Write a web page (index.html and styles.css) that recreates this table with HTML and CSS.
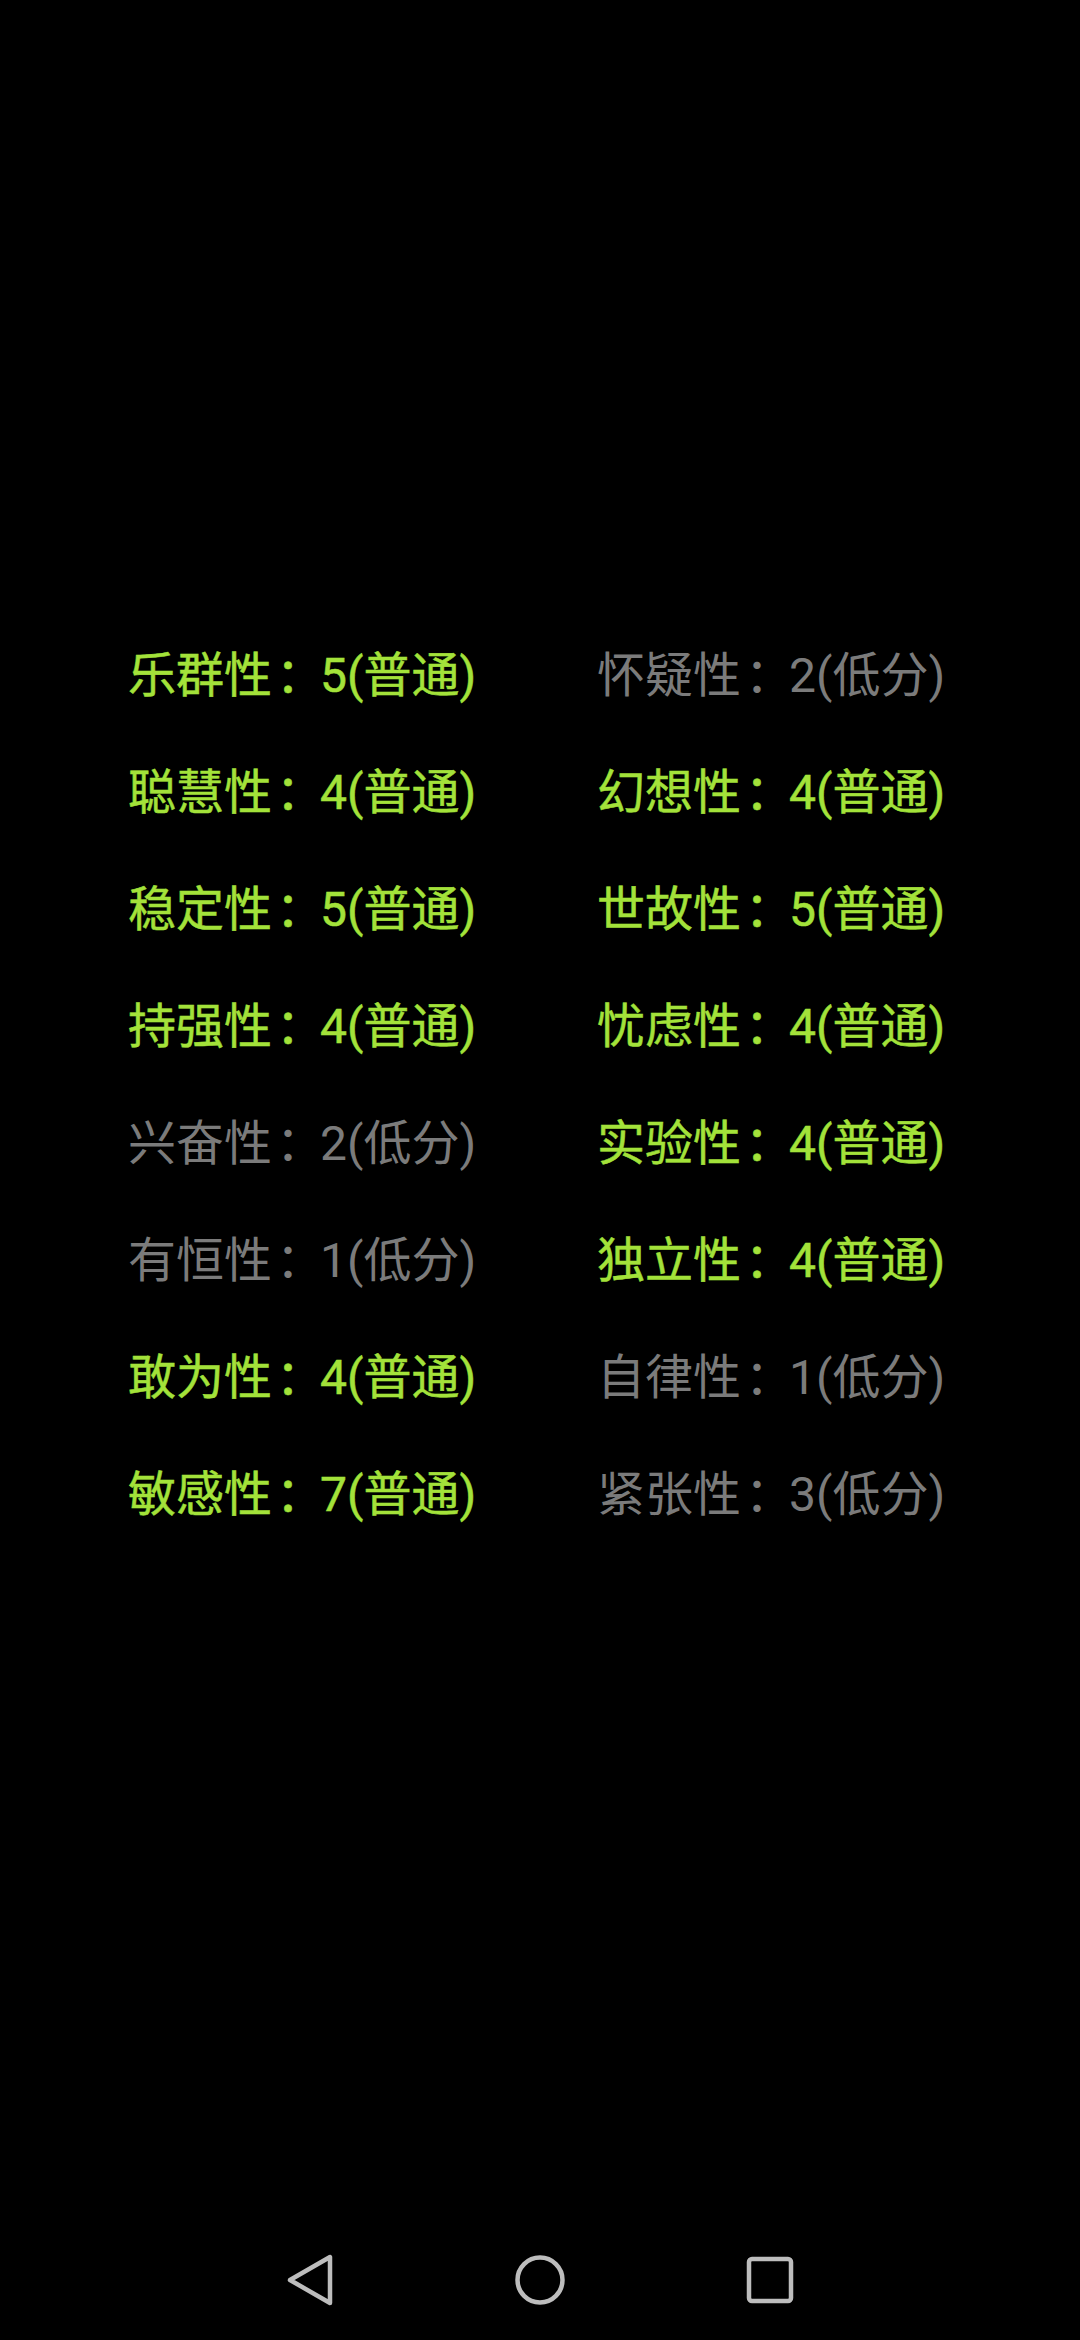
FILE: index.html
```html
<!DOCTYPE html>
<html lang="zh-CN">
<head>
<meta charset="utf-8">
<title>性格因素</title>
<link rel="stylesheet" href="styles.css">
</head>
<body>
<div class="screen">
  <main class="grid">
    <div class="item hi">乐群性<span class="colon">：</span>5(普通)</div>
    <div class="item lo">怀疑性<span class="colon">：</span>2(低分)</div>
    <div class="item hi">聪慧性<span class="colon">：</span>4(普通)</div>
    <div class="item hi">幻想性<span class="colon">：</span>4(普通)</div>
    <div class="item hi">稳定性<span class="colon">：</span>5(普通)</div>
    <div class="item hi">世故性<span class="colon">：</span>5(普通)</div>
    <div class="item hi">持强性<span class="colon">：</span>4(普通)</div>
    <div class="item hi">忧虑性<span class="colon">：</span>4(普通)</div>
    <div class="item lo">兴奋性<span class="colon">：</span>2(低分)</div>
    <div class="item hi">实验性<span class="colon">：</span>4(普通)</div>
    <div class="item lo">有恒性<span class="colon">：</span>1(低分)</div>
    <div class="item hi">独立性<span class="colon">：</span>4(普通)</div>
    <div class="item hi">敢为性<span class="colon">：</span>4(普通)</div>
    <div class="item lo">自律性<span class="colon">：</span>1(低分)</div>
    <div class="item hi">敏感性<span class="colon">：</span>7(普通)</div>
    <div class="item lo">紧张性<span class="colon">：</span>3(低分)</div>
  </main>
  <nav class="navbar">
    <svg class="nav-icon" width="48" height="52" viewBox="0 0 48 52">
      <path d="M44 3 L44 49 L4 26 Z" fill="none" stroke="#bdbdbd" stroke-width="4.5" stroke-linejoin="round"/>
    </svg>
    <svg class="nav-icon" width="52" height="52" viewBox="0 0 52 52">
      <circle cx="26" cy="26" r="22.5" fill="none" stroke="#bdbdbd" stroke-width="4.5"/>
    </svg>
    <svg class="nav-icon" width="48" height="48" viewBox="0 0 48 48">
      <rect x="3" y="3" width="42" height="42" rx="3" fill="none" stroke="#bdbdbd" stroke-width="4.5"/>
    </svg>
  </nav>
</div>
</body>
</html>
```
FILE: styles.css
```css
html, body {
  margin: 0;
  padding: 0;
  background: #000;
}
.screen {
  width: 1080px;
  height: 2340px;
  display: flex;
  flex-direction: column;
  background: #000;
  font-family: Roboto, "Noto Sans CJK SC", sans-serif;
}
.grid {
  display: grid;
  grid-template-columns: 469px auto;
  grid-auto-rows: 117px;
  padding: 617px 0 0 128px;
}
.item {
  font-size: 48px;
  line-height: 117px;
  white-space: nowrap;
}
.colon {
  padding-left: 4px;
  letter-spacing: -4px;
}
.hi {
  color: #a3e23a;
  font-weight: 400;
  -webkit-text-stroke: 0.5px #a3e23a;
}
.lo {
  color: #7b7b7b;
  font-weight: 400;
}
.navbar {
  margin-top: auto;
  height: 120px;
  display: flex;
  justify-content: center;
  align-items: center;
  gap: 180px;
}
.nav-icon {
  display: block;
}
```
